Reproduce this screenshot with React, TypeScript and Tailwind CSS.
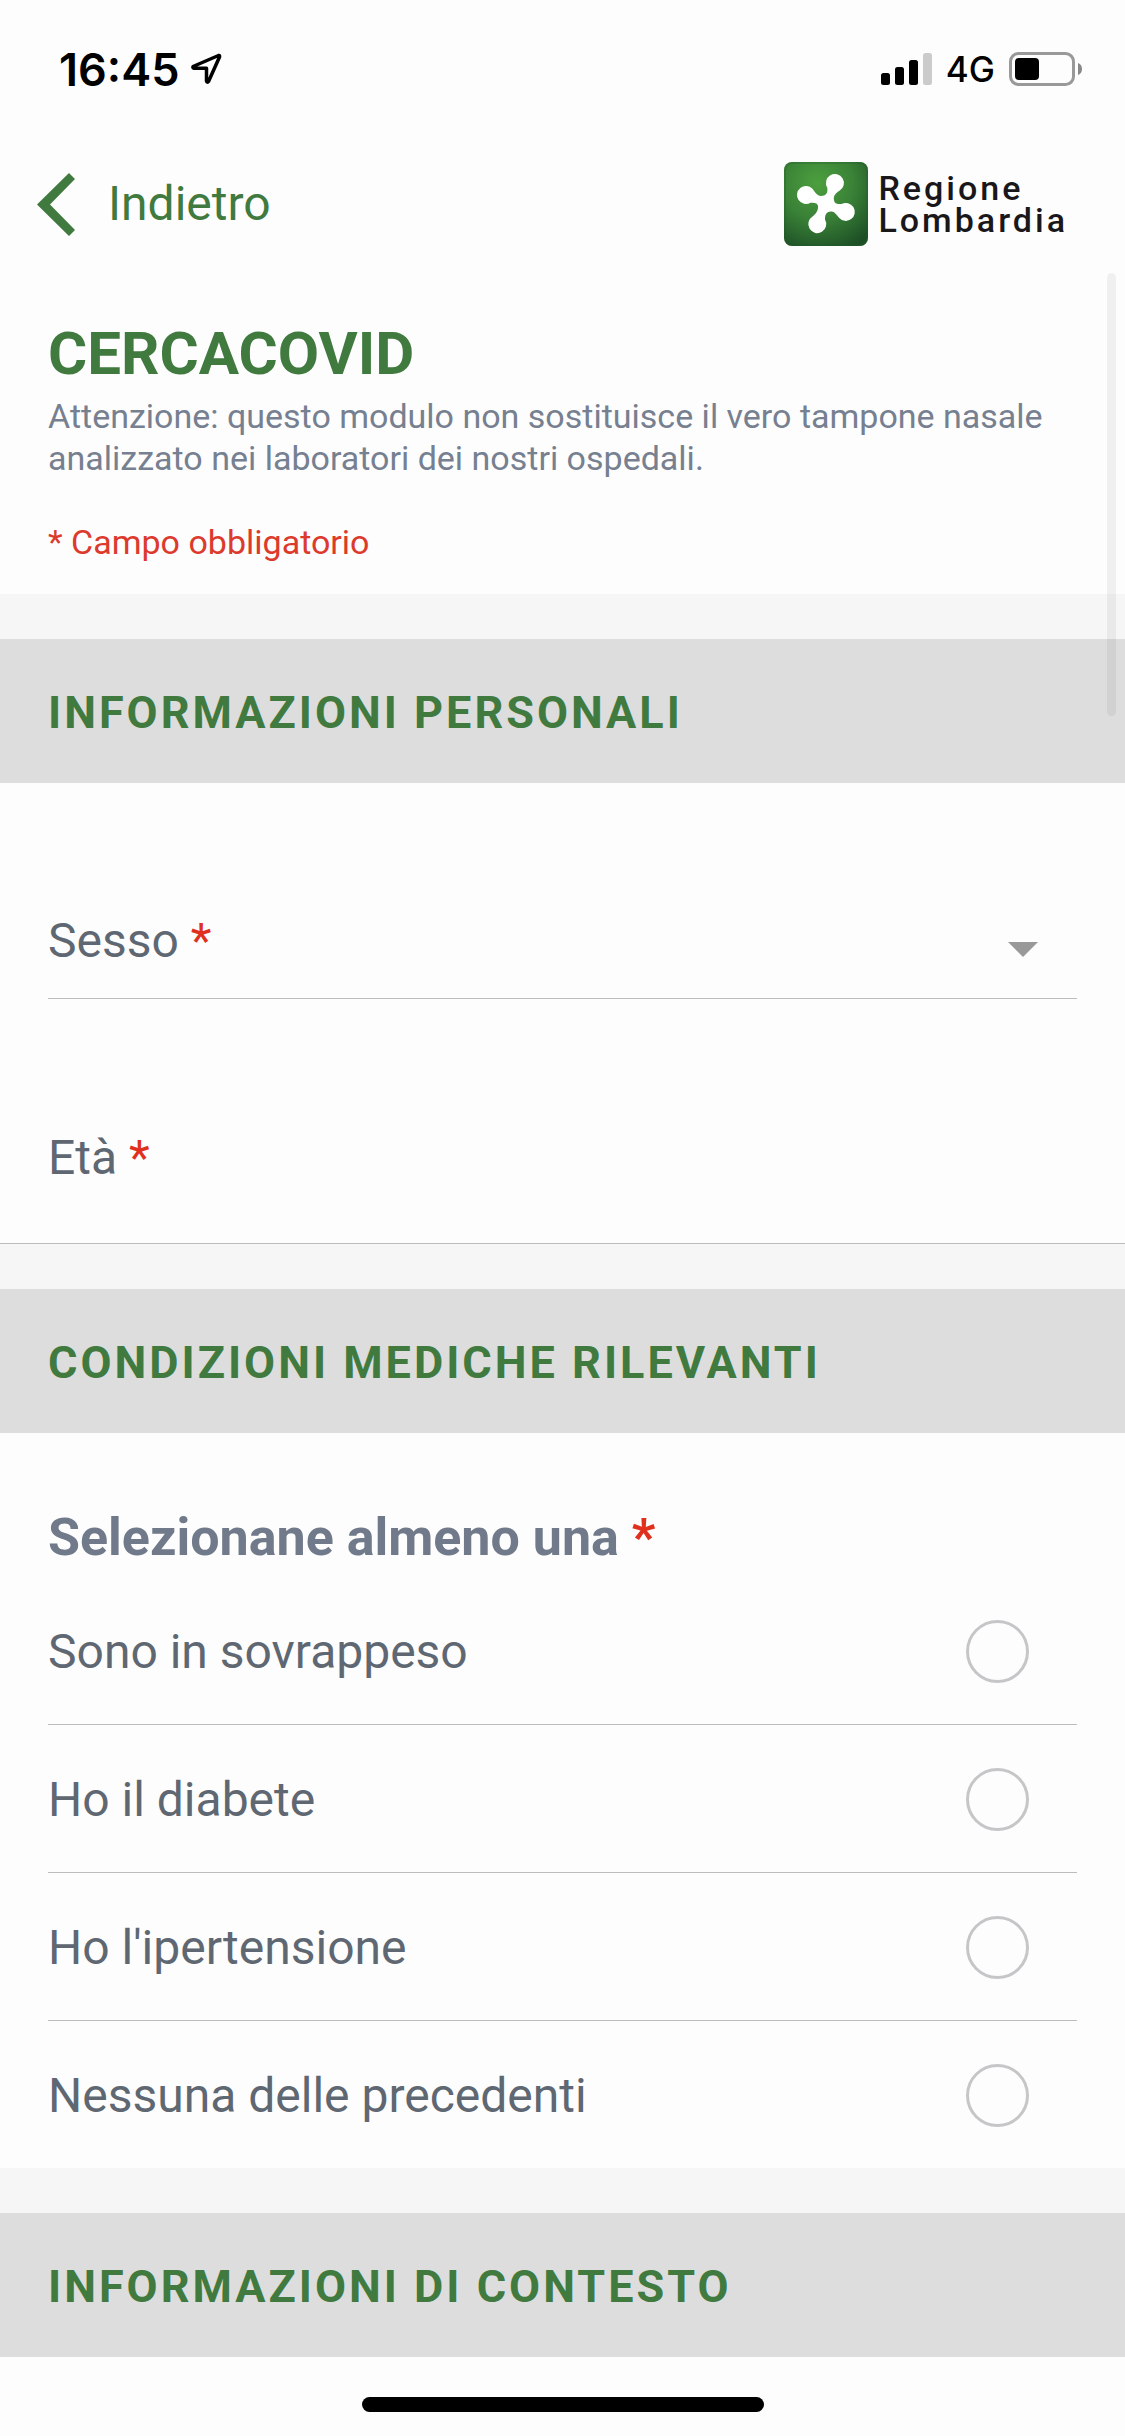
import React from "react";

const conditions = [
  { id: "sovrappeso", label: "Sono in sovrappeso" },
  { id: "diabete", label: "Ho il diabete" },
  { id: "ipertensione", label: "Ho l'ipertensione" },
  { id: "nessuna", label: "Nessuna delle precedenti" },
];

function StatusBar() {
  return (
    <div className="flex h-[138px] items-center justify-between pr-[42px] pl-[59px] font-[Inter,sans-serif] text-black">
      <div className="flex items-center gap-[11px]">
        <span className="text-[45px] leading-none font-semibold">16:45</span>
        <svg className="h-[32px] w-[32px]" viewBox="0 0 32 32" fill="none" aria-hidden="true">
          <path
            d="M28.500 2.500 L3 13.500 Q2.500 15 4 15.200 H16.500 V28 Q17.300 30 18.500 28.500 L29.500 4 Q30 2 28.500 2.500Z"
            stroke="#000"
            strokeWidth="3.5"
            strokeLinejoin="round"
          />
        </svg>
      </div>
      <div className="flex items-center gap-[14px]">
        <svg className="h-[34px] w-[51px]" viewBox="0 0 51 34" aria-hidden="true">
          <rect x="0" y="21" width="9" height="12" rx="2.5" />
          <rect x="14" y="15" width="9" height="18" rx="2.5" />
          <rect x="28" y="8" width="9" height="25" rx="2.5" />
          <rect x="42" y="1" width="9" height="32" rx="2.5" fill="#cbcbcb" />
        </svg>
        <span className="text-[35px] leading-none font-medium">4G</span>
        <svg className="h-[34px] w-[74px]" viewBox="0 0 74 34" aria-hidden="true">
          <rect x="1.5" y="1.5" width="63" height="31" rx="8" fill="none" stroke="#999" strokeWidth="3" />
          <rect x="6" y="6" width="24" height="22" rx="4" />
          <path d="M69 11 Q73 12.500 73 17 Q73 21.500 69 23Z" fill="#888" />
        </svg>
      </div>
    </div>
  );
}

function RegioneLogo() {
  return (
    <div className="flex items-center gap-[10px]">
      <svg className="h-[84px] w-[84px]" viewBox="0 0 84 84" aria-hidden="true">
        <defs>
          <radialGradient id="tile" cx="0.4" cy="0.25" r="0.85">
            <stop offset="0" stopColor="#4c9f3e" />
            <stop offset="0.5" stopColor="#3a8237" />
            <stop offset="1" stopColor="#1d4f26" />
          </radialGradient>
        </defs>
        <rect width="84" height="84" rx="8" fill="url(#tile)" />
        <rect x="1" y="1" width="82" height="82" rx="7" fill="none" stroke="#23592a" strokeOpacity="0.3" strokeWidth="2" />
        <path
          fill="#fff"
          d="M28.500 26.800C31 30 33 34 37 34C42 34 44 31 43.300 25.800A9 9 0 1 1 55.500 28.800C52 31 49 34 50 38C50.500 42 53 42 57.500 42A9 9 0 1 1 55 55.800C53 53 50 49 47 49.500C42 50 41 53 41 57.500A9 9 0 1 1 28.500 54.500C32 52 34.500 48 34 44C33.500 41 31 40.500 26.500 40.800A9 9 0 1 1 28.500 26.800Z"
        />
      </svg>
      <div className="text-[34px] leading-8 font-medium tracking-[3px] text-[#1a171b]">
        <div>Regione</div>
        <div>Lombardia</div>
      </div>
    </div>
  );
}

function SectionTitle({ children }: { children: React.ReactNode }) {
  return (
    <h2 className="flex h-36 items-center bg-[#dddddd] px-12 pt-1 text-[45px] font-bold tracking-[3px] text-[#417a3f]">
      {children}
    </h2>
  );
}

function Required() {
  return <span className="text-[#e0301e]">*</span>;
}

function Gap() {
  return <div className="h-[45px] bg-[#f6f6f6]" />;
}

export default function App() {
  return (
    <div className="min-h-screen w-full bg-[#fdfdfd] font-[Roboto,sans-serif]">
      <StatusBar />
      <header className="flex h-[132px] items-center justify-between pr-[57px] pl-[37px]">
        <button type="button" className="flex items-center gap-[33px] text-5xl text-[#417a3f]">
          <svg className="h-[63px] w-[38px]" viewBox="0 0 38 63" fill="currentColor" aria-hidden="true">
            <path d="M32 0 38 6 13 31.500 38 57 32 63 0 31.500Z" />
          </svg>
          Indietro
        </button>
        <RegioneLogo />
      </header>

      <main className="relative">
        <div className="absolute top-[3px] right-[9px] h-[443px] w-[9px] rounded-full bg-black/5" />

        <div className="px-12 pt-[51px] pb-[30px]">
          <h1 className="text-[60px] leading-[66px] font-bold text-[#417a3f]">CERCACOVID</h1>
          <p className="mt-2 text-[34px] leading-[42px] text-[#768090]">
            Attenzione: questo modulo non sostituisce il vero tampone nasale analizzato nei laboratori dei nostri ospedali.
          </p>
          <p className="mt-[42px] pb-px text-[34px] leading-[42px] text-[#dc3a2c]">* Campo obbligatorio</p>
        </div>

        <Gap />
        <section>
          <SectionTitle>INFORMAZIONI PERSONALI</SectionTitle>
          <div className="mx-12 flex items-center border-b border-[#bcbcbe] pt-32 pr-[39px] pb-[27px] text-5xl leading-[60px] text-[#5f6872]">
            <label htmlFor="sesso">
              Sesso <Required />
            </label>
            <select id="sesso" required defaultValue="" className="h-[60px] min-w-0 flex-1 appearance-none bg-transparent outline-none">
              <option value="" label=" " />
              <option value="f">Femmina</option>
              <option value="m">Maschio</option>
            </select>
            <svg className="mt-4 h-[15px] w-[30px]" viewBox="0 0 30 15" aria-hidden="true">
              <path d="M0 0H30L15 15Z" fill="#999" />
            </svg>
          </div>
          <div className="flex items-center border-b border-[#bcbcbe] px-12 pt-[129px] pb-[55px] text-5xl leading-[60px] text-[#5f6872]">
            <label htmlFor="eta">
              Età <Required />
            </label>
            <input id="eta" type="text" inputMode="numeric" required className="ml-4 h-[60px] min-w-0 flex-1 bg-transparent outline-none" />
          </div>
        </section>

        <Gap />
        <section>
          <SectionTitle>CONDIZIONI MEDICHE RILEVANTI</SectionTitle>
          <fieldset className="px-12">
            <legend className="pt-[75px] pb-[9px] text-[52px] leading-[60px] font-bold text-[#717a8a]">
              Selezionane almeno una <Required />
            </legend>
            {conditions.map((c) => (
              <label
                key={c.id}
                htmlFor={c.id}
                className="flex h-[148px] items-center justify-between border-b border-[#bcbcbe] pt-0.5 pr-12 text-5xl text-[#5f6872] last:h-[147px] last:border-b-0"
              >
                <span>{c.label}</span>
                <input
                  id={c.id}
                  type="checkbox"
                  className="h-[63px] w-[63px] appearance-none rounded-full border-[3px] border-[#c6c6c8] checked:bg-[#417a3f]"
                />
              </label>
            ))}
          </fieldset>
        </section>

        <Gap />
        <section>
          <SectionTitle>INFORMAZIONI DI CONTESTO</SectionTitle>
        </section>
      </main>

      <footer className="pt-10 pb-6">
        <div className="mx-auto h-[15px] w-[402px] rounded-full bg-black" />
      </footer>
    </div>
  );
}
